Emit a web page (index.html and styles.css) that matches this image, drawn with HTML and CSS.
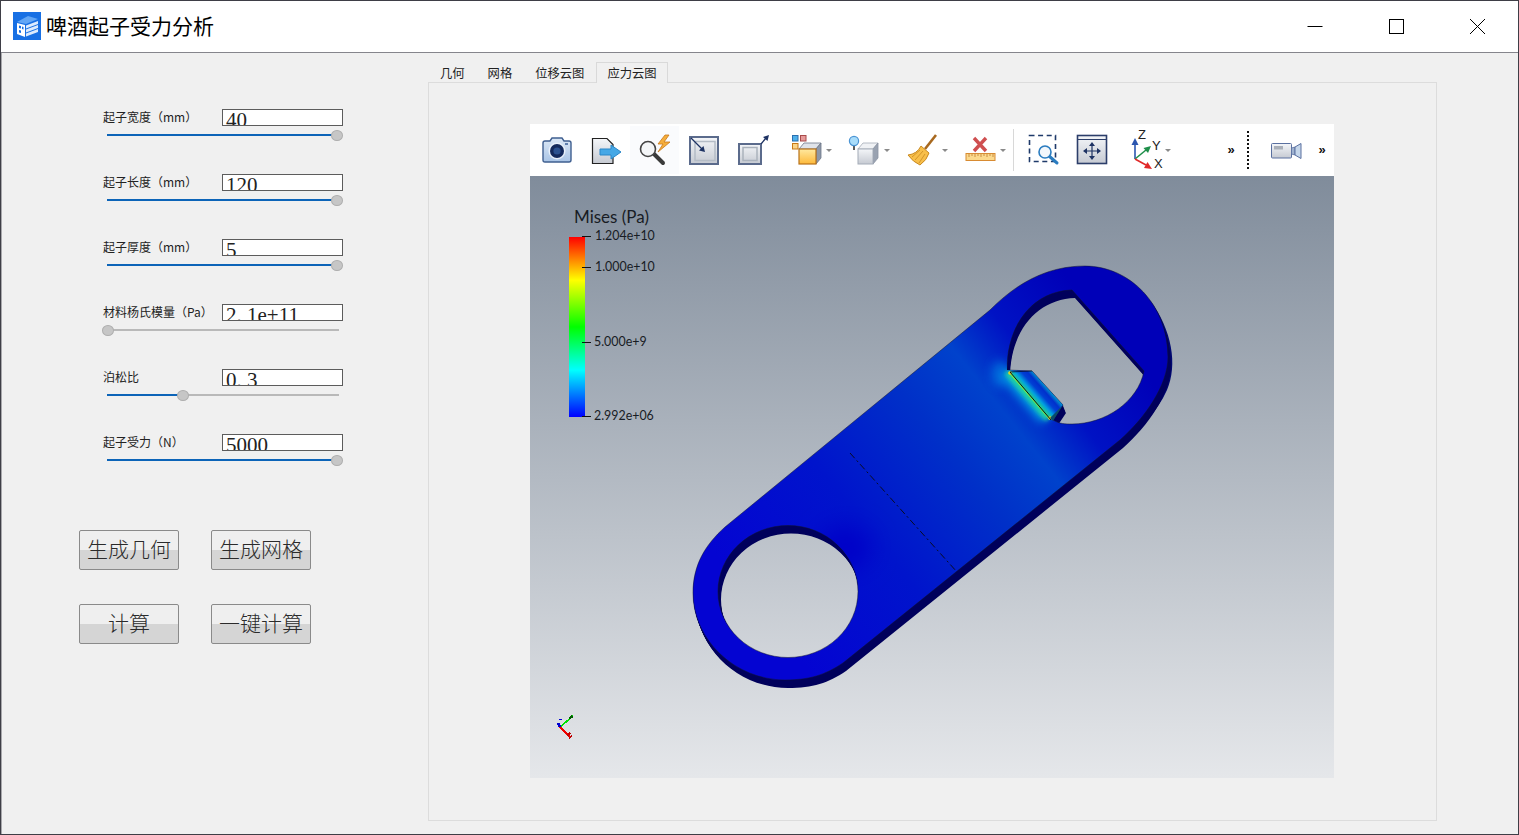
FILE: index.html
```html
<!DOCTYPE html>
<html lang="zh-CN">
<head>
<meta charset="utf-8">
<title>啤酒起子受力分析</title>
<link rel="stylesheet" href="styles.css">
</head>
<body>
<svg class="defs" aria-hidden="true">
  <defs>
    <linearGradient id="gSilver" x1="0" y1="0" x2="0" y2="1"><stop offset="0" stop-color="#f4f6f9"/><stop offset="1" stop-color="#c6cad2"/></linearGradient>
    <linearGradient id="gCam" x1="0" y1="0" x2="0" y2="1"><stop offset="0" stop-color="#dce8f6"/><stop offset="1" stop-color="#a9c4e6"/></linearGradient>
    <linearGradient id="gYellow" x1="0" y1="0" x2="0" y2="1"><stop offset="0" stop-color="#ffe9a0"/><stop offset="1" stop-color="#fdb93a"/></linearGradient>
    <linearGradient id="gBg" x1="0" y1="0" x2="0" y2="1"><stop offset="0" stop-color="#808c9b"/><stop offset="1" stop-color="#e5e7ea"/></linearGradient>
    <linearGradient id="gBar" x1="0" y1="0" x2="0" y2="1">
      <stop offset="0" stop-color="#ff0000"/><stop offset=".24" stop-color="#ffff00"/><stop offset=".5" stop-color="#00ff00"/><stop offset=".74" stop-color="#00ffff"/><stop offset="1" stop-color="#0000ff"/>
    </linearGradient>
    <linearGradient id="gFace" gradientUnits="userSpaceOnUse" x1="760" y1="610" x2="1110" y2="330">
      <stop offset="0" stop-color="#0404d2"/><stop offset=".3" stop-color="#0014cc"/><stop offset=".55" stop-color="#0030c8"/><stop offset=".7" stop-color="#0042cc"/><stop offset=".82" stop-color="#0012c4"/><stop offset="1" stop-color="#0000b8"/>
    </linearGradient>
    <linearGradient id="gTab" gradientUnits="userSpaceOnUse" x1="1030" y1="396" x2="1047" y2="381">
      <stop offset="0" stop-color="#28d080"/><stop offset=".2" stop-color="#00a0e0"/><stop offset=".42" stop-color="#0040d4"/><stop offset=".62" stop-color="#0030cc"/><stop offset=".86" stop-color="#00b0d0"/><stop offset="1" stop-color="#30d090"/>
    </linearGradient>
    <filter id="blur6" x="-50%" y="-50%" width="200%" height="200%"><feGaussianBlur stdDeviation="5"/></filter>
    <filter id="blur2" x="-50%" y="-50%" width="200%" height="200%"><feGaussianBlur stdDeviation="2"/></filter>
    <filter id="blur14" x="-50%" y="-50%" width="200%" height="200%"><feGaussianBlur stdDeviation="12"/></filter>
    <path id="face" fill-rule="evenodd" d="M758,500 L990,310 C1015,285 1045,266 1085,266 C1130,266 1168,305 1168,357 C1168,385 1145,418 1120,440 L843,663 C825,675 810,680 785,680 C735,680 693,640 693,593 C693,565 705,545 725,527 Z M718,591.5 A70,66 0 1,0 858,591.5 A70,66 0 1,0 718,591.5 Z M1072,290 C1035,291 1007,322 1007,370 L1032,371 L1063,405 L1053,420 C1060,424 1065,424 1072,424 C1105,424 1138,402 1144,371 Z"/>
    <clipPath id="faceClip"><use href="#face" clip-rule="evenodd"/></clipPath>
  </defs>
</svg>
<div class="window">
  <header class="titlebar">
    <svg class="app-icon" viewBox="0 0 28 28">
      <rect width="28" height="28" fill="#1870e4"/>
      <path d="M4 10 L15 4 L25 7 L13 12 Z" fill="#62a6f5"/>
      <path d="M4 11 L12 13 V25 L4 22 Z" fill="#fff"/>
      <path d="M6 13.5 L8 14 V16.5 L6 16 Z M9 14.5 L10.5 15 V17.5 L9 17 Z M6 18 L8 18.6 V21 L6 20.4 Z" fill="#1870e4"/>
      <path d="M13 13.5 L25 9 V12 L13 16.5 Z M13 17.5 L25 13 V16 L13 20.5 Z M13 21.5 L25 17 V20 L13 24.5 Z" fill="#dcebfd"/>
    </svg>
    <h1 class="app-title">啤酒起子受力分析</h1>
    <div class="win-controls">
      <svg class="win-btn" viewBox="0 0 16 16"><path d="M0.5 8.5 H15.5" stroke="#000" fill="none"/></svg>
      <svg class="win-btn" viewBox="0 0 16 16"><rect x="1.5" y="1.5" width="14" height="14" stroke="#000" fill="none"/></svg>
      <svg class="win-btn" viewBox="0 0 16 16"><path d="M1 1 L16 16 M16 1 L1 16" stroke="#000" fill="none"/></svg>
    </div>
  </header>
  <div class="content">
    <aside class="sidebar">
      <div class="param"><div class="param-head"><span class="param-label">起子宽度（mm）</span><div class="field">40</div></div>
        <div class="slider"><div class="slider-fill" style="width:226px"></div><div class="slider-thumb" style="left:224px"></div></div></div>
      <div class="param"><div class="param-head"><span class="param-label">起子长度（mm）</span><div class="field">120</div></div>
        <div class="slider"><div class="slider-fill" style="width:226px"></div><div class="slider-thumb" style="left:224px"></div></div></div>
      <div class="param"><div class="param-head"><span class="param-label">起子厚度（mm）</span><div class="field">5</div></div>
        <div class="slider"><div class="slider-fill" style="width:226px"></div><div class="slider-thumb" style="left:224px"></div></div></div>
      <div class="param"><div class="param-head"><span class="param-label">材料杨氏模量（Pa）</span><div class="field">2<span class="dot">.</span>1e+11</div></div>
        <div class="slider"><div class="slider-fill" style="width:0"></div><div class="slider-thumb" style="left:-5px"></div></div></div>
      <div class="param"><div class="param-head"><span class="param-label">泊松比</span><div class="field">0<span class="dot">.</span>3</div></div>
        <div class="slider"><div class="slider-fill" style="width:72px"></div><div class="slider-thumb" style="left:70px"></div></div></div>
      <div class="param"><div class="param-head"><span class="param-label">起子受力（N）</span><div class="field">5000</div></div>
        <div class="slider"><div class="slider-fill" style="width:226px"></div><div class="slider-thumb" style="left:224px"></div></div></div>
      <div class="actions">
        <button class="action">生成几何</button>
        <button class="action">生成网格</button>
        <button class="action">计算</button>
        <button class="action">一键计算</button>
      </div>
    </aside>
    <main class="main">
      <nav class="tabs">
        <span class="tab">几何</span>
        <span class="tab">网格</span>
        <span class="tab">位移云图</span>
        <span class="tab active">应力云图</span>
      </nav>
      <section class="pane">
        <div class="render">
          <div class="toolbar">
            <span class="tool"><svg class="ico" viewBox="0 0 32 32"><path d="M2 9 Q2 7 4 7 H9 L11 4 H21 L23 7 H28 Q30 7 30 9 V26 Q30 28 28 28 H4 Q2 28 2 26 Z" fill="url(#gCam)" stroke="#3f5f90" stroke-width="1.4"/><circle cx="16" cy="17" r="8.5" fill="#e8f0fa"/><circle cx="16" cy="17" r="7" fill="#142a5c"/><circle cx="16" cy="17" r="3.6" fill="#2c5290"/><rect x="24" y="9" width="3" height="2" fill="#5f7fae"/></svg></span>
            <span class="tool"><svg class="ico" viewBox="0 0 32 32"><path d="M2.5 4.5 H17 L23 10.5 V29.5 H2.5 Z" fill="url(#gSilver)" stroke="#222" stroke-width="1.2"/><path d="M10 15 H21 V11 L31 18 L21 25 V21 H10 Z" fill="#46a8e6" stroke="#2b87c8"/></svg></span>
            <span class="tool tool-hover"><svg class="ico" viewBox="0 0 32 32"><path d="M15 20 L24 29" stroke="#3a3a3a" stroke-width="4" stroke-linecap="round"/><circle cx="9" cy="15" r="7.5" fill="#f4f6f8" stroke="#444" stroke-width="1.6"/><path d="M26 1 L19 10 H24 L19 18 L31 8 H25 L30 1 Z" fill="#f5ae3c" stroke="#c9781a" stroke-width=".8"/></svg></span>
            <span class="tool"><svg class="ico" viewBox="0 0 32 32"><rect x="2" y="3" width="28" height="27" fill="url(#gSilver)" stroke="#5b6b8c" stroke-width="2"/><rect x="7" y="7.5" width="20" height="19" fill="none" stroke="#b4bcc6" stroke-width="1.5"/><path d="M3 4 L15 16" stroke="#1d3263" stroke-width="1.3"/><path d="M17 18 L11 16.5 L15.5 12 Z" fill="#1d3263"/></svg></span>
            <span class="tool"><svg class="ico" viewBox="0 0 32 32"><rect x="2" y="10" width="22" height="20" fill="url(#gSilver)" stroke="#5b6b8c" stroke-width="2"/><rect x="6" y="13.5" width="14" height="13" fill="none" stroke="#aab2bc" stroke-width="1.5"/><path d="M24 10 L29 4" stroke="#1d3263" stroke-width="1.3"/><path d="M32 1 L30.5 7 L26 3 Z" fill="#1d3263"/></svg></span>
            <span class="tool-menu"><svg class="ico" viewBox="0 0 32 32"><rect x="1.5" y="1.5" width="5.5" height="5.5" fill="#4eb0ea" stroke="#2a6fb0"/><rect x="9.5" y="1.5" width="5.5" height="5.5" fill="#e69a9a" stroke="#a84a4a"/><rect x="1.5" y="9.5" width="5.5" height="5.5" fill="#fbd488" stroke="#c87818"/><path d="M8 15 L13 9 H30 L25 15 Z" fill="#dfe3e9" stroke="#6d7788" stroke-width=".8"/><path d="M25 15 L30 9 V24 L25 30 Z" fill="#8d97a8" stroke="#6d7788" stroke-width=".8"/><rect x="8" y="15" width="17" height="15" fill="url(#gYellow)" stroke="#b8721a" stroke-width="1.2"/></svg><i class="caret"></i></span>
            <span class="tool-menu"><svg class="ico" viewBox="0 0 32 32"><path d="M9 15 L14 9 H29 L24 15 Z" fill="#f0f2f5" stroke="#a4acb8" stroke-width=".8"/><path d="M24 15 L29 9 V24 L24 30 Z" fill="#99a2b1" stroke="#8a93a2" stroke-width=".8"/><rect x="9" y="15" width="15" height="15" fill="url(#gSilver)" stroke="#a4acb8" stroke-width="1"/><path d="M5 11 V16" stroke="#333" stroke-width="1.6"/><circle cx="5" cy="7" r="4.6" fill="#a8dcfa" stroke="#4a94d4" stroke-width="1.2"/></svg><i class="caret"></i></span>
            <span class="tool-menu"><svg class="ico" viewBox="0 0 32 32"><path d="M29 1 L18 15" stroke="#a8691f" stroke-width="2.6"/><path d="M14 12 L22 19 Q20 26 13 31 Q6 28 1 21 Q10 20 14 12 Z" fill="#f8bf4a" stroke="#c98a22" stroke-width="1"/><path d="M16 17 L8 26 M18 20 L12 29 M13 16 L5 23" stroke="#c98a22" stroke-width=".8"/></svg><i class="caret"></i></span>
            <span class="tool-menu"><svg class="ico" viewBox="0 0 32 32"><rect x="1" y="19.5" width="29" height="7" fill="#fbd98c" stroke="#d88b32"/><path d="M4 20 V23 M7 20 V22 M10 20 V23 M13 20 V22 M16 20 V23 M19 20 V22 M22 20 V23 M25 20 V22 M28 20 V23" stroke="#b56f22" stroke-width=".7"/><path d="M9 4 L21 17 M21 4 L9 17" stroke="#cf4f50" stroke-width="3.4"/></svg><i class="caret"></i></span>
            <i class="sep"></i>
            <span class="tool tool-zoom"><svg class="ico" viewBox="0 0 32 32"><rect x="3.5" y="1.5" width="26" height="26" fill="none" stroke="#1f3a6a" stroke-width="1.6" stroke-dasharray="5 3.6"/><path d="M23 22 L31 29" stroke="#2a7cc0" stroke-width="3" stroke-linecap="round"/><circle cx="19" cy="18" r="6" fill="#f2f7fc" stroke="#2a7cc0" stroke-width="1.6"/></svg></span>
            <span class="tool"><svg class="ico" viewBox="0 0 32 32"><rect x="1.5" y="1.5" width="29" height="28" fill="url(#gSilver)" stroke="#2c3e6a" stroke-width="1.6"/><path d="M2 5.5 H30" stroke="#2c3e6a"/><path d="M16 10 V24 M9 17 H23" stroke="#1d3263" stroke-width="1.2"/><path d="M16 8 L19 12 H13 Z M16 26 L19 22 H13 Z M7 17 L11 14 V20 Z M25 17 L21 14 V20 Z" fill="#1d3263"/></svg></span>
            <span class="tool-menu tool-axes"><svg class="ico" viewBox="0 0 32 32"><path d="M5 25 V9" stroke="#2b56b0" stroke-width="1.6"/><path d="M5 4 L8.5 11 H1.5 Z" fill="#2b56b0"/><path d="M5 25 L16 16" stroke="#1f8f4a" stroke-width="1.6"/><path d="M21 12 L18 19 L13.5 14 Z" fill="#1f8f4a"/><path d="M5 25 L16 31" stroke="#e02828" stroke-width="1.6"/><path d="M22 35 L14 34 L17.5 28 Z" fill="#e02828"/><text class="axis-letter" x="8" y="5">Z</text><text class="axis-letter" x="22" y="16">Y</text><text class="axis-letter" x="24" y="34">X</text></svg><i class="caret"></i></span>
            <span class="more more-first">»</span>
            <i class="sep-dotted"></i>
            <span class="tool tool-video"><svg class="ico" viewBox="0 0 32 32"><rect x="1.5" y="9.5" width="20" height="14.5" rx="1" fill="url(#gSilver)" stroke="#5a70a0"/><rect x="4" y="12" width="9" height="3.5" fill="#a9afb9"/><path d="M21.5 14 L25 13 V21 L21.5 20 Z" fill="#9fb2cf" stroke="#5a70a0" stroke-width=".8"/><path d="M25 13 L31 9.5 V24.5 L25 21 Z" fill="#c5d6ea" stroke="#5a70a0"/></svg></span>
            <span class="more more-last">»</span>
          </div>
          <div class="viewport">
            <svg class="scene" viewBox="530 176 804 602">
              <rect x="530" y="176" width="804" height="602" fill="url(#gBg)"/>
              <g class="scalar">
                <text class="sb-title" x="574" y="223">Mises (Pa)</text>
                <rect x="569" y="237" width="16" height="180" fill="url(#gBar)"/>
                <path d="M582 236.5 H591 M582 267.5 H591 M582 342.5 H591 M582 416.5 H591" stroke="#111" fill="none"/>
                <text class="sb-label" x="595" y="240">1.204e+10</text>
                <text class="sb-label" x="595" y="271">1.000e+10</text>
                <text class="sb-label" x="594" y="346">5.000e+9</text>
                <text class="sb-label" x="594" y="420">2.992e+06</text>
              </g>
              <path class="wall-right" d="M1150,300 C1172,330 1178,365 1167,390 C1157,412 1142,426 1126,442 L1120,438 C1145,416 1166,385 1166,357 C1166,340 1160,315 1150,300 Z"/>
              <g class="wall">
                <use href="#face" transform="translate(3,8)"/>
                <use href="#face" transform="translate(2.6,7)"/>
                <use href="#face" transform="translate(2.2,6)"/>
                <use href="#face" transform="translate(1.8,5)"/>
                <use href="#face" transform="translate(1.4,4)"/>
                <use href="#face" transform="translate(1,3)"/>
                <use href="#face" transform="translate(.6,2)"/>
                <use href="#face" transform="translate(.3,1)"/>
              </g>
              <use href="#face" fill="url(#gFace)" stroke="#10142c" stroke-width=".5"/>
              <g clip-path="url(#faceClip)">
                <ellipse cx="845" cy="548" rx="26" ry="22" fill="#0000c8" filter="url(#blur14)"/>
                <ellipse cx="1000" cy="374" rx="9" ry="13" fill="#0064da" filter="url(#blur6)"/>
                <path d="M1005 372 L1046 419" stroke="#0098e4" stroke-width="14" filter="url(#blur6)" fill="none"/>
                <path d="M1007 372 L1048 419" stroke="#20d8a0" stroke-width="6" filter="url(#blur2)" fill="none"/>
                <path d="M1009 372 L1050 419" stroke="#70e850" stroke-width="2" fill="none"/>
                <polygon points="1010,372 1032,371 1063,405 1051,420" fill="url(#gTab)"/>
                <circle cx="1010" cy="373" r="1.8" fill="#e8d020"/>
                <circle cx="1050" cy="418" r="1.8" fill="#e8d020"/>
              </g>
              <path d="M1010 372 L1051 420" stroke="#06101c" fill="none"/>
              <path d="M1010 372 L1032 371" stroke="#06101c" stroke-width=".7" fill="none"/>
              <polygon points="1063,405 1053,421 1050,418" fill="#0b4c68"/>
              <path d="M850 453 L957 572" stroke="#0a0c20" stroke-dasharray="7 3 2 3" fill="none"/>
              <g class="mini-axes" fill="none">
                <path d="M560 727 L573 716" stroke="#00e000" stroke-width="1.6"/>
                <path d="M569 719 L571 717 M571 716 L573 717" stroke="#006000" stroke-width="2"/>
                <path d="M560 727 L571 738" stroke="#f00000" stroke-width="1.6"/>
                <path d="M567 736 L570 733 M569 738 L572 736" stroke="#c00000" stroke-width="1.6"/>
                <path d="M560 727 L558 723" stroke="#0000d0" stroke-width="2.4"/>
                <path d="M559 719.5 H562" stroke="#0000d0"/>
              </g>
            </svg>
          </div>
        </div>
      </section>
    </main>
  </div>
</div>
</body>
</html>
```
FILE: styles.css
```css
* { box-sizing: border-box; }
html, body { margin: 0; padding: 0; }
body {
  width: 1519px;
  height: 835px;
  overflow: hidden;
  background: #f0f0f0;
  font-family: "Noto Sans CJK SC", "Noto Sans", sans-serif;
  color: #111;
}
.defs { position: absolute; width: 0; height: 0; }
.window {
  width: 1519px;
  height: 835px;
  border: 1px solid #3e3e46;
  display: flex;
  flex-direction: column;
}
.titlebar {
  height: 52px;
  flex: none;
  background: #fff;
  border-bottom: 1px solid #85858c;
  display: flex;
  align-items: center;
  padding-left: 12px;
}
.app-icon { width: 28px; height: 28px; flex: none; margin-bottom: 1px; }
.app-title {
  margin: 0 0 4px 5px;
  font-size: 21px;
  font-weight: 400;
  line-height: 28px;
  color: #000;
}
.win-controls { margin-left: auto; display: flex; padding: 0 33px 1px 0; gap: 65px; }
.win-btn { width: 16px; height: 16px; display: block; }
.content { flex: 1; display: flex; min-height: 0; border-left: 1px solid #a8a8ac; }
.sidebar { width: 426px; flex: none; padding: 56px 0 0 77px; }
.param { height: 65px; margin-left: 23px; }
.param-head { display: flex; align-items: flex-start; height: 17px; }
.param-label {
  width: 120px;
  padding-left: 1px;
  font-size: 12px;
  line-height: 15px;
  color: #222;
  white-space: nowrap;
  flex: none;
}
.field {
  width: 121px;
  height: 17px;
  flex: none;
  background: #fff;
  border: 1px solid #5c5c5c;
  overflow: hidden;
  font-family: "Liberation Serif", serif;
  font-size: 21px;
  line-height: 20px;
  padding-left: 3px;
  color: #222;
  white-space: nowrap;
}
.dot { letter-spacing: 5.25px; }
.slider {
  position: relative;
  margin: 8px 0 0 5px;
  width: 232px;
  height: 2px;
  background: #b9b9b9;
}
.slider-fill { height: 2px; background: #0c64b8; }
.slider-thumb {
  position: absolute;
  top: -4px;
  width: 12px;
  height: 11px;
  border-radius: 50%;
  background: #c6c6c6;
  border: 1px solid #aeaeae;
}
.actions {
  margin-top: 31px;
  display: grid;
  grid-template-columns: 100px 100px;
  column-gap: 32px;
  row-gap: 34px;
}
.action {
  height: 40px;
  padding: 0 0 4px;
  border: 1px solid #8a8a8a;
  border-radius: 2px;
  background: linear-gradient(#efefef 50%, #d5d5d5 50%);
  font-family: "Noto Sans CJK SC", sans-serif;
  font-size: 21px;
  font-weight: 300;
  line-height: 30px;
  color: #2b2b2b;
}
.main { flex: 1; padding-top: 9px; display: flex; flex-direction: column; min-width: 0; }
.tabs { display: flex; gap: 1px; height: 20px; padding-left: 1px; position: relative; z-index: 1; }
.tab {
  padding: 0 10px;
  height: 21px;
  font-size: 12.3px;
  line-height: 20px;
  color: #222;
  border: 1px solid transparent;
  border-bottom: 0;
  white-space: nowrap;
}
.tab.active { border-color: #d9d9d9; background: #f0f0f0; }
.pane {
  width: 1009px;
  height: 739px;
  border: 1px solid #dcdcdc;
  padding: 41px 0 0 101px;
}
.render { width: 804px; height: 654px; display: flex; flex-direction: column; }
.toolbar {
  height: 52px;
  flex: none;
  background: #fff;
  display: flex;
  align-items: center;
  padding-left: 2px;
}
.tool { width: 49px; height: 48px; flex: none; display: flex; align-items: center; justify-content: center; }
.tool-hover { background: #fafbfd; }
.tool-zoom { width: 50px; }
.ico { width: 32px; height: 32px; display: block; overflow: visible; flex: none; }
.tool-menu { width: 58px; height: 48px; flex: none; display: flex; align-items: center; padding-left: 14px; }
.tool-axes { padding-left: 14px; width: 60px; }
.caret {
  margin-left: 3px;
  width: 0;
  height: 0;
  border-left: 3px solid transparent;
  border-right: 3px solid transparent;
  border-top: 3px solid #8a8a8a;
}
.sep { width: 1px; height: 42px; background: #d8d8d8; margin: 0 3px 0 4px; flex: none; }
.axis-letter { font-family: "Liberation Sans", sans-serif; font-size: 13px; fill: #222; }
.more {
  width: 20px;
  flex: none;
  text-align: center;
  font-family: "Liberation Sans", sans-serif;
  font-size: 13px;
  font-weight: 700;
  line-height: 20px;
  color: #111;
}
.more-first { margin-left: 45px; }
.more-last { margin-left: 2px; }
.sep-dotted { width: 0; height: 38px; border-left: 2px dotted #111; margin-left: 6px; flex: none; }
.tool-video { margin-left: 12px; }
.viewport { flex: 1; min-height: 0; }
.scene { width: 804px; height: 602px; display: block; }
.wall { fill: #00005c; }
.wall-right { fill: #000870; }
.scalar text { font-family: "Lato", sans-serif; fill: #181c24; }
.sb-title { font-size: 17px; }
.sb-label { font-size: 12.4px; }
.mini-axes { shape-rendering: crispEdges; }
```
